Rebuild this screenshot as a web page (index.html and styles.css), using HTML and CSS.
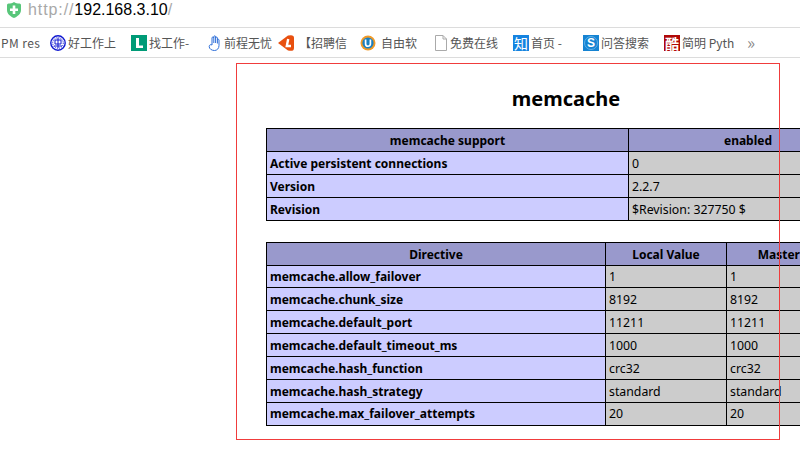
FILE: index.html
```html
<!DOCTYPE html>
<html lang="en">
<head>
<meta charset="UTF-8">
<meta name="viewport" content="width=device-width, initial-scale=1.0">
<title>memcache</title>
<link rel="stylesheet" href="styles.css">
</head>
<body>
  <div class="address-bar">
    <svg class="shield" width="14" height="16" viewBox="0 0 14 16">
      <path d="M1.5 1.5 C3.5 1.5 5.5 1 7 0 C8.5 1 10.5 1.5 12.5 1.5 Q14 1.5 14 3 L14 8 C14 12 10.5 14.5 7 16 C3.5 14.5 0 12 0 8 L0 3 Q0 1.5 1.5 1.5 Z" fill="#58c67a"/>
      <path d="M5.7 3.5 H8.3 V6.5 H11 V9 H8.3 V12 H5.7 V9 H3 V6.5 H5.7 Z" fill="#fff"/>
    </svg>
    <span class="url"><span class="scheme">http://</span>192.168.3.10<span class="slash">/</span></span>
  </div>

  <div class="bookmarks">
    <div class="bookmark"><span class="pm">PM res</span></div>
    <div class="bookmark">
      <svg class="icon" viewBox="0 0 16 16"><circle cx="8" cy="8" r="7.2" fill="#fff" stroke="#1018d0" stroke-width="1.4"/><circle cx="8" cy="8" r="5.3" fill="none" stroke="#1018d0" stroke-width="1" stroke-dasharray="1 1"/><path d="M5 5 H11 V9 H5 Z M8 3 V13 M4 11 H12" fill="none" stroke="#1018d0" stroke-width="1"/></svg>
      <span>好工作上</span>
    </div>
    <div class="bookmark">
      <svg class="icon" viewBox="0 0 16 16"><rect width="16" height="16" fill="#009b77"/><path d="M5 3 H8 V10.5 H12 V13 H5 Z" fill="#fff"/></svg>
      <span>找工作-</span>
    </div>
    <div class="bookmark">
      <svg class="icon" viewBox="0 0 16 16"><path d="M6 10 V3 C6 1.6 7.8 1.6 7.8 3 V1.8 C7.8 .5 9.6 .5 9.6 1.8 V3 C9.6 1.8 11.4 1.8 11.4 3 V5 C11.4 4 13 4 13 5 V10.5 C13 13.5 11 15.5 8.5 15.5 C5.8 15.5 3.2 14 3.2 11.5 C3.2 9.8 4.8 9.2 6 10 Z M7.8 3 V8 M9.6 3 V8 M11.4 5 V8.5" fill="#fff" stroke="#2f6fd8" stroke-width="1"/></svg>
      <span>前程无忧</span>
    </div>
    <div class="bookmark">
      <svg class="icon" viewBox="0 0 16 16"><path d="M0 8 L10 .6 Q16 -1 16 3 V13 Q16 17 10 15.4 Z" fill="#e8500f"/><path d="M10.2 4 L8.8 11 H13" fill="none" stroke="#fff" stroke-width="2.4"/></svg>
      <span class="indent">【招聘信</span>
    </div>
    <div class="bookmark">
      <svg class="icon" viewBox="0 0 16 16"><circle cx="8" cy="8" r="7.5" fill="#f09a28"/><circle cx="8" cy="8" r="5.6" fill="#1a7fc0"/><path d="M5.6 4.5 V9 C5.6 12 10.4 12 10.4 9 V4.5" fill="none" stroke="#fff" stroke-width="1.7"/></svg>
      <span class="indent">自由软</span>
    </div>
    <div class="bookmark">
      <svg class="icon icon-doc" viewBox="0 0 12 16"><path d="M.5 .5 H8 L11.5 4 V15.5 H.5 Z M8 .5 V4 H11.5" fill="#fff" stroke="#aaa"/></svg>
      <span>免费在线</span>
    </div>
    <div class="bookmark">
      <span class="icon tile tile-zhi">知</span>
      <span>首页 -</span>
    </div>
    <div class="bookmark">
      <svg class="icon" viewBox="0 0 16 16"><rect width="16" height="16" fill="#1583d2"/><circle cx="8" cy="8" r="6.5" fill="none" stroke="#5fb0e8"/><text class="s-mark" x="8" y="12" text-anchor="middle">S</text></svg>
      <span>问答搜索</span>
    </div>
    <div class="bookmark">
      <span class="icon tile tile-ku">酷</span>
      <span>简明 Pyth</span>
    </div>
    <div class="more">»</div>
  </div>

  <div class="page">
    <h1>memcache</h1>
    <table class="info info-support">
      <colgroup><col class="c-name"><col class="c-value"></colgroup>
      <tr class="head"><th>memcache support</th><th>enabled</th></tr>
      <tr><td class="name">Active persistent connections</td><td>0</td></tr>
      <tr><td class="name">Version</td><td>2.2.7</td></tr>
      <tr><td class="name">Revision</td><td>$Revision: 327750 $</td></tr>
    </table>

    <table class="info info-directives">
      <colgroup><col class="c-directive"><col class="c-local"><col class="c-master"></colgroup>
      <tr class="head"><th>Directive</th><th>Local Value</th><th>Master Value</th></tr>
      <tr class="short"><td class="name">memcache.allow_failover</td><td>1</td><td>1</td></tr>
      <tr><td class="name">memcache.chunk_size</td><td>8192</td><td>8192</td></tr>
      <tr><td class="name">memcache.default_port</td><td>11211</td><td>11211</td></tr>
      <tr><td class="name">memcache.default_timeout_ms</td><td>1000</td><td>1000</td></tr>
      <tr><td class="name">memcache.hash_function</td><td>crc32</td><td>crc32</td></tr>
      <tr><td class="name">memcache.hash_strategy</td><td>standard</td><td>standard</td></tr>
      <tr class="last"><td class="name">memcache.max_failover_attempts</td><td>20</td><td>20</td></tr>
    </table>
  </div>

  <div class="red-box"></div>
</body>
</html>
```

FILE: styles.css
```css
html, body {
  margin: 0;
  height: 465px;
  overflow: hidden;
  background: #fff;
}
body {
  font-family: "Noto Sans", "Noto Sans CJK SC", sans-serif;
  color: #000;
}

/* browser chrome */
.address-bar {
  display: flex;
  align-items: center;
  height: 27px;
  padding-left: 7px;
  border-bottom: 1px solid #dcdcdc;
  box-sizing: content-box;
}
.shield {
  margin-right: 7px;
  margin-top: -7px;
}
.url {
  font-family: "Liberation Sans", sans-serif;
  font-size: 16px;
  margin-top: -8px;
}
.scheme, .slash {
  color: #a8a8a8;
}
.scheme {
  letter-spacing: 0.9px;
}
.bookmarks {
  display: grid;
  grid-template-columns: 49px 81px 75px 72px 82px 75px 78px 70px 81px 83px 30px;
  height: 29px;
  padding-left: 1px;
  border-bottom: 1px solid #dcdcdc;
  font-family: "Noto Sans CJK SC", "Noto Sans", sans-serif;
  font-size: 12px;
  color: #555;
}
.bookmark {
  display: flex;
  align-items: center;
  gap: 2px;
  white-space: nowrap;
}
.pm {
  letter-spacing: 0.4px;
}
.icon {
  width: 16px;
  height: 16px;
  flex: none;
}
.icon-doc {
  width: 12px;
  margin-right: 1px;
}
.indent {
  margin-left: 3px;
}
.tile {
  display: flex;
  align-items: center;
  justify-content: center;
  color: #fff;
  font-size: 14px;
  line-height: 16px;
}
.tile-zhi {
  background: #1583e0;
}
.tile-ku {
  background: #b00808;
  font-weight: bold;
}
.s-mark {
  fill: #fff;
  font-family: "Liberation Sans", sans-serif;
  font-size: 12px;
  font-weight: bold;
}
.more {
  display: flex;
  align-items: center;
  padding-bottom: 3px;
  font-size: 17px;
  color: #888;
}

/* phpinfo section */
.page {
  width: 600px;
  margin-left: 266px;
  padding-top: 27px;
}
h1 {
  margin: 0 0 16px;
  font-size: 20px;
  line-height: 27px;
  text-align: center;
}
.info {
  width: 601px;
  table-layout: fixed;
  border-collapse: collapse;
  font-size: 12.3px;
  line-height: 17px;
}
.info-support {
  margin-bottom: 21px;
}
.c-name { width: 362px; }
.c-value { width: 239px; }
.c-directive { width: 339px; }
.c-local { width: 121px; }
.c-master { width: 141px; }
.info th, .info td {
  height: 22px;
  padding: 0 3px;
  border: 1px solid #000;
  box-sizing: border-box;
  white-space: nowrap;
  overflow: hidden;
}
.info tr {
  height: 23px;
}
.info tr.short, .info tr.short td {
  height: 22px;
}
.info tr.last td {
  padding-bottom: 2px;
}
.info th {
  background: #99c;
  font-size: 12px;
  text-align: center;
}
.info td {
  background: #ccc;
}
.info td.name {
  background: #ccf;
  font-size: 12px;
  font-weight: bold;
}

/* annotation drawn over the screenshot */
.red-box {
  position: absolute;
  left: 236px;
  top: 63px;
  width: 544px;
  height: 377px;
  box-sizing: border-box;
  border: 1px solid #f03c3c;
}
```
